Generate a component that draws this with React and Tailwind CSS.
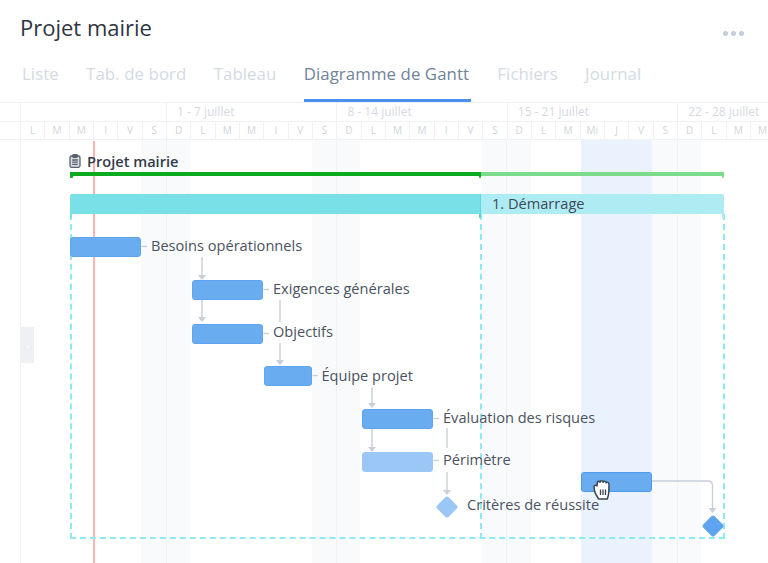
const tabs = [
  ["Liste", false], ["Tab. de bord", false], ["Tableau", false],
  ["Diagramme de Gantt", true], ["Fichiers", false], ["Journal", false],
];
const weeks = [["", "w-[145px]"], ["1 - 7 juillet", "w-[170.4px]"], ["8 - 14 juillet", "w-[170.4px]"], ["15 - 21 juillet", "w-[170.4px]"], ["22 - 28 juillet", "w-[120px]"]];
const days = "L M M I V S D L M M I V S D L M M I V S D L M Mi J V S D L M M".split(" ");

const stripes = [
  "left-[141px] w-[49px]", "left-[312px] w-[48px]", "left-[482px] w-[49px]", "left-[652px] w-[49px]",
];
const weekLines = ["left-[166px]", "left-[336px]", "left-[506px]", "left-[677px]"];

const bars = [
  "left-[70px] top-[134px] w-[71px] bg-[#6aacf0] border-[#5ea4ee]",
  "left-[192px] top-[177px] w-[71px] bg-[#6aacf0] border-[#5ea4ee]",
  "left-[192px] top-[221px] w-[71px] bg-[#6aacf0] border-[#5ea4ee]",
  "left-[264px] top-[263px] w-[48px] bg-[#6aacf0] border-[#5ea4ee]",
  "left-[362px] top-[306px] w-[71px] bg-[#6aacf0] border-[#5ea4ee]",
  "left-[362px] top-[349px] w-[71px] bg-[#9ac7f5] border-[#9ac7f5]",
  "left-[581px] top-[369px] w-[71px] bg-[#6aacf0] border-[#4f9aea]",
];
const labels = [
  ["Besoins opérationnels", "left-[151px] top-[132px]"],
  ["Exigences générales", "left-[273px] top-[175px]"],
  ["Objectifs", "left-[273px] top-[218px]"],
  ["Équipe projet", "left-[321.5px] top-[262px]"],
  ["Évaluation des risques", "left-[443px] top-[304px]"],
  ["Périmètre", "left-[443px] top-[346px]"],
  ["Critères de réussite", "left-[467px] top-[391px]"],
];

// Connector strokes: coordinates are those of the chart canvas (page y - 103)
const lines = [
  "M141.5 143.5H147", "M263.5 186.5H269", "M263.5 230.5H269", "M312.5 272.5H318", "M433.5 315.5H439", "M433.5 357.5H439",
  "M202 154V172", "M202 197V214", "M280 197V219", "M280 240V257", "M372 284V300", "M372 325V344", "M447 325V345", "M447 369V387",
  "M652 378H708Q712.5 378 712.5 383V405",
];
const arrows = [
  "M198 172H206L202 177Z", "M198 214H206L202 219Z", "M276 257H284L280 262Z", "M368 300H376L372 305Z",
  "M368 344H376L372 349Z", "M443 387H451L447 392Z", "M708.5 405H716.5L712.5 410Z",
];

export default function App() {
  return (
    <div className="w-[768px] h-[563px] overflow-hidden bg-white flex flex-col font-['Open_Sans',sans-serif]">
      <header className="h-[103px] shrink-0 flex flex-col border-b border-[#eef0f3]">
        <div className="h-[60px] flex justify-between pl-5 pr-6">
          <h1 className="text-[22px] leading-[30px] pt-[12px] text-[#2f3542]">Projet mairie</h1>
          <div className="flex gap-[3px] pt-[31px]">
            <span className="w-[5px] h-[5px] rounded-full bg-[#c3cbdc]" />
            <span className="w-[5px] h-[5px] rounded-full bg-[#c3cbdc]" />
            <span className="w-[5px] h-[5px] rounded-full bg-[#c3cbdc]" />
          </div>
        </div>
        <nav className="flex pl-[22px] gap-[27.2px] h-[42px]">
          {tabs.map(([t, active]) => (
            <div key={t} className={`text-[16.8px] leading-[28px] tracking-[0.1px] ${active ? "text-[#6f8399] border-b-[3px] border-[#4a90ee] pr-[2px] mr-[-1px]" : "text-[#d3dae3]"}`}>
              {t}
            </div>
          ))}
        </nav>
      </header>

      <main className="relative flex-1 overflow-hidden">
        {/* Timeline header */}
        <div className="flex h-[19px] pl-[21px] border-b border-[#f0f1f3]">
          {weeks.map(([w, cls], i) => (
            <div key={i} className={`${cls} shrink-0 text-[12px] leading-[18px] text-[#d5d9df] pl-[10px] whitespace-nowrap ${i ? "border-l border-[#eef0f3]" : ""}`}>{w}</div>
          ))}
        </div>
        <div className="flex h-[18px] pl-[21px] border-b border-[#f0f1f3]">
          {days.map((d, i) => (
            <div key={i} className="w-[24.33px] shrink-0 text-[10px] leading-[17px] text-center text-[#d0d5db] border-r border-[#f0f1f3]">{d}</div>
          ))}
        </div>

        {/* Chart canvas */}
        {stripes.map((s) => <div key={s} className={`absolute top-[37px] bottom-0 bg-[#f9fafb] ${s}`} />)}
        <div className="absolute top-[37px] bottom-0 left-[581px] w-[71px] bg-[#eaf3fd]" />
        <div className="absolute top-0 bottom-0 left-[20px] w-px bg-[#f0f1f3]" />
        {weekLines.map((l) => <div key={l} className={`absolute top-[37px] bottom-0 w-px bg-[#f1f2f4] ${l}`} />)}
        <div className="absolute top-[38px] bottom-0 left-[93px] w-[1.5px] bg-[#fbb4b4]" />

        {/* Collapse handle */}
        <div className="absolute left-[21px] top-[224px] w-[13px] h-[36px] bg-[#eef0f3] flex items-center justify-center">
          <span className="text-[9px] leading-none text-white">›</span>
        </div>

        {/* Project row */}
        <div className="absolute left-[69px] top-[48px] flex items-center gap-[6px] text-[14.6px] leading-[20px] font-semibold text-[#333b4a]">
          <svg width="12" height="14" viewBox="0 0 12 14" fill="none" stroke="#5a6270" strokeWidth="1.3">
            <rect x="1" y="2" width="10" height="11.3" rx="1.5" fill="#d8dbe0" />
            <rect x="3.7" y="0.7" width="4.6" height="2.6" rx="0.8" fill="#5a6270" />
            <path d="M3.2 6H8.8M3.2 8.2H8.8M3.2 10.4H8.8" />
          </svg>
          <span>Projet mairie</span>
        </div>

        {/* Project summary bar */}
        <div className="absolute left-[70px] top-[69px] flex w-[654px] h-[6px]">
          <div className="relative w-[411px] h-[3.5px] bg-[#0bab20] rounded-tl-[2px]">
            <span className="absolute left-0 top-0 w-[2.5px] h-[6px] bg-[#0bab20] rounded-b-[1px]" />
            <span className="absolute right-0 top-0 w-[2.5px] h-[6px] bg-[#0bab20] rounded-b-[1px]" />
          </div>
          <div className="relative flex-1 h-[3.5px] bg-[#7cdc8c] rounded-tr-[2px]">
            <span className="absolute right-0 top-0 w-[2.5px] h-[6px] bg-[#7cdc8c] rounded-b-[1px]" />
          </div>
        </div>

        {/* Dashed phase outline */}
        <div className="absolute left-[70px] top-[111px] w-[655px] h-[325px] border-2 border-t-0 border-dashed border-[#8eeaf2]" />
        <div className="absolute left-[480px] top-[111px] h-[325px] border-l-2 border-dashed border-[#8eeaf2]" />

        {/* Phase band */}
        <div className="absolute left-[70px] top-[91px] flex w-[654px] h-[25px]">
          <div className="relative w-[411px] h-[20px] bg-[#7ae0e8] rounded-tl-[2px] border-r border-[#5fd6e0]">
            <span className="absolute left-0 top-[20px] w-[2px] h-[4px] bg-[#7ae0e8]" />
            <span className="absolute right-[-1px] top-[20px] w-[2px] h-[4px] bg-[#5fd6e0]" />
          </div>
          <div className="relative flex-1 h-[20px] bg-[#aeecf3] rounded-tr-[2px] pl-[11px] text-[14.6px] leading-[18px] text-[#3f4859]">
            1. Démarrage
            <span className="absolute right-0 top-[20px] w-[2px] h-[4px] bg-[#aeecf3]" />
          </div>
        </div>

        {/* Connectors */}
        <svg className="absolute left-0 top-0 w-[768px] h-[460px]" viewBox="0 0 768 460" fill="none">
          {lines.map((d) => <path key={d} d={d} stroke="#c8cfd9" strokeWidth="1.4" />)}
          {arrows.map((d) => <path key={d} d={d} fill="#c8cfd9" />)}
        </svg>

        {/* Tasks */}
        {bars.map((b) => <div key={b} className={`absolute h-[20px] rounded-[3px] border ${b}`} />)}
        {labels.map(([t, p]) => <div key={t} className={`absolute text-[14.6px] leading-[20px] text-[#4a5261] whitespace-nowrap ${p}`}>{t}</div>)}

        {/* Milestones */}
        <div className="absolute left-[439px] top-[396px] w-[16px] h-[16px] rotate-45 rounded-[2px] bg-[#9ac7f5]" />
        <div className="absolute left-[704.5px] top-[415px] w-[16px] h-[16px] rotate-45 rounded-[2px] bg-[#5ea4ee]" />

        {/* Grab cursor */}
        <svg className="absolute left-[590px] top-[374px]" width="24" height="25" viewBox="0 0 24 25">
          <path d="M4 9.5C4.5 7.5 6.5 8 7 9L7.3 5.5C7.6 3.8 9.7 3.8 10 5.3C10.3 3.3 12.8 3.3 13.2 5.3C13.7 3.7 16 3.9 16.2 5.8C17 4.8 18.9 5.3 19 7.2L18.8 15C18.7 18 18 20 17.3 22H8.5C7.5 19.5 5.5 17.5 4.7 14.5Z" fill="#ffffff" stroke="#3b4552" strokeWidth="1.5" strokeLinejoin="round" />
          <path d="M10.5 12.5V18M13 12.5V18M15.5 12.5V18" stroke="#3b4552" strokeWidth="1.3" />
        </svg>
      </main>
    </div>
  );
}
